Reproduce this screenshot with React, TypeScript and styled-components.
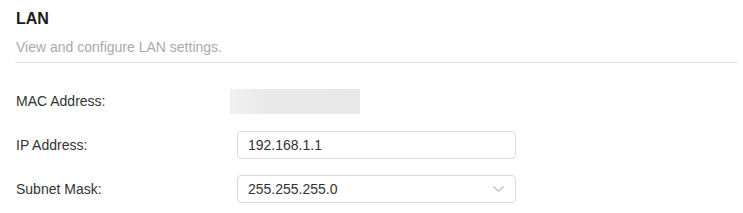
import React from "react";
import styled, { createGlobalStyle } from "styled-components";

const Global = createGlobalStyle`
  html, body { margin: 0; padding: 0; background: #fff; }
  body { font-family: "Liberation Sans", Arial, sans-serif; color: #333; }
  * { box-sizing: border-box; }
`;

const Page = styled.div`
  padding: 10px 5px 0 15px;
`;

const Header = styled.div`
  padding-left: 1px;
  padding-bottom: 5px;
  border-bottom: 1px solid #e3e3e3;
`;

const Title = styled.h1`
  margin: 0;
  font-size: 16px;
  line-height: 18px;
  font-weight: bold;
  color: #1a1a1a;
`;

const Subtitle = styled.p`
  margin: 9px 0 0;
  font-size: 14px;
  line-height: 20px;
  color: #aaaaaa;
`;

const Form = styled.div`
  display: flex;
  flex-direction: column;
  gap: 16px;
  padding-top: 24px;
  padding-left: 1px;
`;

const Row = styled.div`
  display: flex;
  align-items: center;
  height: 28px;
`;

const Label = styled.div<{ $width: number }>`
  width: ${(p) => p.$width}px;
  font-size: 14px;
  line-height: 20px;
  color: #333;
  flex-shrink: 0;
`;

const Masked = styled.div`
  width: 130px;
  height: 25px;
  background: linear-gradient(90deg, #f0f0f0 0%, #e9e9e9 30%, #e8e8e8 100%);
`;

const Field = styled.div`
  position: relative;
  width: 279px;
  height: 28px;
  border: 1px solid #d9d9d9;
  border-radius: 4px;
  background: #fff;
  display: flex;
  align-items: center;
  padding: 0 10px;
`;

const Input = styled.input`
  border: none;
  outline: none;
  background: transparent;
  padding: 0;
  width: 100%;
  font-family: "Liberation Sans", Arial, sans-serif;
  font-size: 14px;
  color: #333;
`;

const Chevron = styled.svg`
  position: absolute;
  right: 11px;
  top: 50%;
  margin-top: -3px;
`;

export default function App() {
  return (
    <>
      <Global />
      <Page>
        <Header>
          <Title>LAN</Title>
          <Subtitle>View and configure LAN settings.</Subtitle>
        </Header>
        <Form>
          <Row>
            <Label $width={214}>MAC Address:</Label>
            <Masked />
          </Row>
          <Row>
            <Label $width={221}>IP Address:</Label>
            <Field>
              <Input defaultValue="192.168.1.1" />
            </Field>
          </Row>
          <Row>
            <Label $width={221}>Subnet Mask:</Label>
            <Field>
              <Input defaultValue="255.255.255.0" readOnly />
              <Chevron width="11" height="6" viewBox="0 0 11 6">
                <path d="M0.5 0.5 L5.5 5.2 L10.5 0.5" fill="none" stroke="#c0c0c0" strokeWidth="1.2" />
              </Chevron>
            </Field>
          </Row>
        </Form>
      </Page>
    </>
  );
}
